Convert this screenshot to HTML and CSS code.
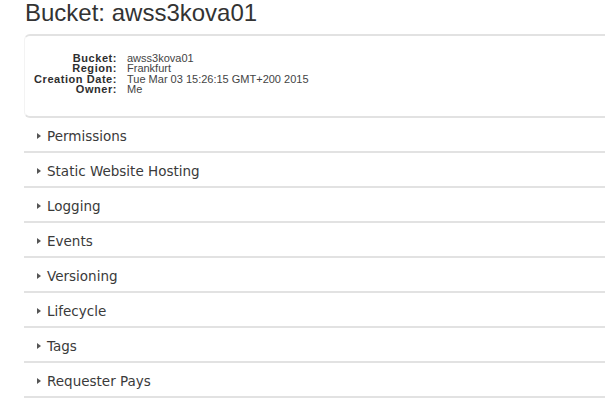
FILE: index.html
```html
<!DOCTYPE html>
<html>
<head>
<meta charset="utf-8">
<link rel="stylesheet" href="styles.css">
</head>
<body>
<div class="page">
  <h1 class="title">Bucket: awss3kova01</h1>
  <div class="card">
    <dl class="details">
      <dt>Bucket:</dt><dd>awss3kova01</dd>
      <dt>Region:</dt><dd>Frankfurt</dd>
      <dt>Creation Date:</dt><dd>Tue Mar 03 15:26:15 GMT+200 2015</dd>
      <dt>Owner:</dt><dd>Me</dd>
    </dl>
  </div>
  <div class="sections">
    <div class="row"><span class="caret"></span><span class="label">Permissions</span></div>
    <div class="row"><span class="caret"></span><span class="label">Static Website Hosting</span></div>
    <div class="row"><span class="caret"></span><span class="label">Logging</span></div>
    <div class="row"><span class="caret"></span><span class="label">Events</span></div>
    <div class="row"><span class="caret"></span><span class="label">Versioning</span></div>
    <div class="row"><span class="caret"></span><span class="label">Lifecycle</span></div>
    <div class="row"><span class="caret"></span><span class="label">Tags</span></div>
    <div class="row"><span class="caret"></span><span class="label">Requester Pays</span></div>
  </div>
</div>
</body>
</html>
```
FILE: styles.css
```css
html, body {
  margin: 0;
  padding: 0;
  background: #fff;
  overflow: hidden;
}
.page {
  padding-left: 24px;
  width: 600px;
}
.title {
  margin: 0;
  font-family: "Liberation Sans", Arial, sans-serif;
  font-weight: normal;
  font-size: 24px;
  line-height: 26px;
  color: #333;
  padding-left: 1px;
}
.card {
  margin-top: 8px;
  border-top: 2px solid #e2e2e2;
  border-bottom: 2px solid #e2e2e2;
  border-left: 1px solid #f3f3f3;
  border-radius: 6px 0 0 6px;
  padding: 17px 0 22px 0;
}
.details {
  margin: 0;
  display: grid;
  grid-template-columns: 92px auto;
  column-gap: 10px;
  font-family: "Liberation Sans", Arial, sans-serif;
  font-size: 11px;
  line-height: 10.25px;
}
.details dt {
  text-align: right;
  font-weight: bold;
  letter-spacing: 0.55px;
  color: #2e2e2e;
}
.details dd {
  margin: 0;
  color: #444;
}
.row {
  display: flex;
  align-items: center;
  height: 29px;
  padding-top: 4px;
  padding-left: 13px;
  border-bottom: 2px solid #e2e2e2;
  font-family: "DejaVu Sans", Verdana, sans-serif;
  font-size: 13.5px;
  line-height: 29px;
  color: #3a3a3a;
}
.caret {
  width: 0;
  height: 0;
  border-top: 3px solid transparent;
  border-bottom: 3px solid transparent;
  border-left: 4px solid #555;
  margin-right: 6px;
  margin-top: -1px;
}
```
